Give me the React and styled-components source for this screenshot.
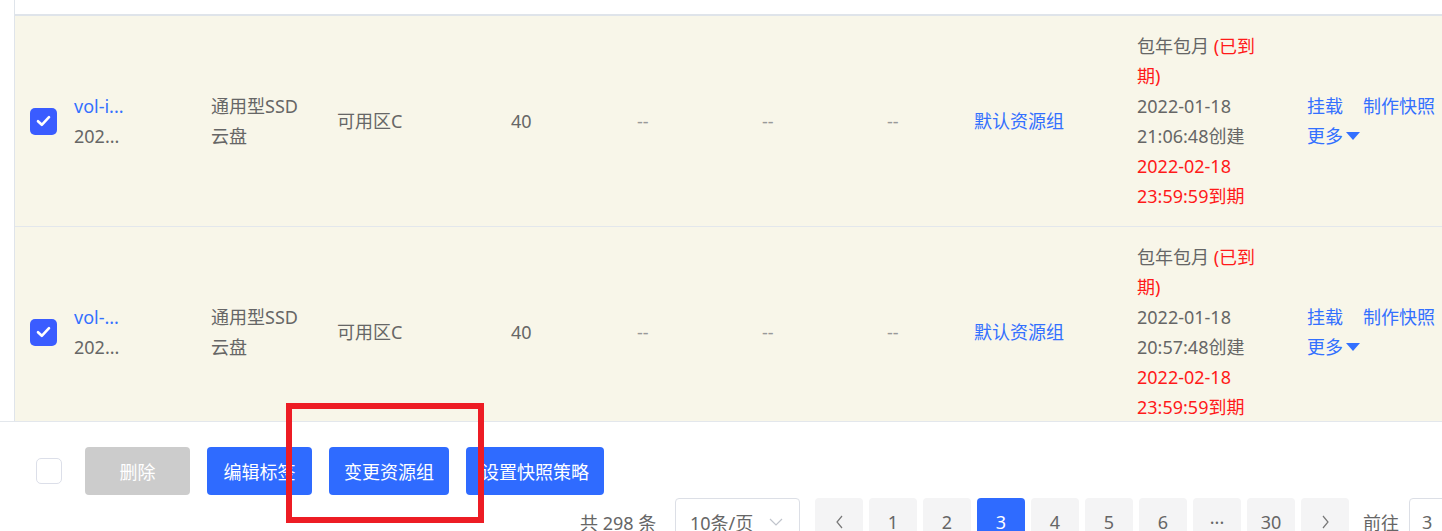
import React from 'react';
import styled, { createGlobalStyle } from 'styled-components';

const GlobalStyle = createGlobalStyle`
  body {
    margin: 0;
    overflow: hidden;
    background: #fff;
    font-family: "Noto Sans", "Noto Sans CJK SC", sans-serif;
  }
`;

const Page = styled.div`
  position: relative;
  height: 531px;
  display: flex;
  flex-direction: column;
  overflow: hidden;
`;

const TableArea = styled.div`
  flex: 1;
  overflow: hidden;
  padding-left: 14px;
`;

const TableFrame = styled.div`
  height: 100%;
  border-left: 1px solid #dfe4ea;
`;

const HeaderStub = styled.div`
  height: 14px;
  border-bottom: 2px solid #dfe4ea;
`;

const Row = styled.div`
  display: grid;
  grid-template-columns: 59px 137px 126px 174px 126px 125px 125px 87px 163px 170px 1fr;
  align-items: center;
  padding: 15px 0;
  background: #f8f6e9;
  border-bottom: 1px solid #e3e7ec;
  font-size: 18px;
  line-height: 30px;
  color: #666;
`;

const Cell = styled.div`
  color: ${(p) => (p.$link ? '#3370ff' : p.$muted ? '#999' : '#666')};
  white-space: ${(p) => (p.$wrap ? 'normal' : 'nowrap')};
  width: ${(p) => p.$w || 'auto'};
`;

const Red = styled.span`
  color: #ff1a1a;
`;

const Line = styled.div`
  color: ${(p) => (p.$red ? '#ff1a1a' : p.$link ? '#3370ff' : '#666')};
`;

const Box = styled.div`
  width: 27px;
  height: 27px;
  margin-left: 15px;
  box-sizing: border-box;
  border-radius: 5px;
  display: flex;
  align-items: center;
  justify-content: center;
  background: ${(p) => (p.$checked ? '#3a5cff' : '#fff')};
  border: ${(p) => (p.$checked ? 'none' : '1.5px solid #dcdfe9')};
`;

const Actions = styled.div`
  display: flex;
  flex-wrap: wrap;
  column-gap: 20px;
  width: 135px;
  color: #3370ff;
`;

const More = styled.span`
  display: inline-flex;
  align-items: center;
  gap: 3px;
`;

const Footer = styled.div`
  height: 110px;
  flex-shrink: 0;
  border-top: 1px solid #e3e7ec;
  padding-top: 25px;
  box-sizing: border-box;
  position: relative;
`;

const BulkBar = styled.div`
  display: flex;
  align-items: center;
  padding-left: 36px;
  gap: 17px;
`;

const BulkCheck = styled(Box)`
  margin-left: 0;
  width: 26px;
  height: 26px;
  margin-right: 6px;
`;

const Button = styled.button`
  height: 48px;
  min-width: 105px;
  padding: 0 15px;
  border: none;
  border-radius: 4px;
  font-family: inherit;
  font-size: 18px;
  color: #fff;
  background: ${(p) => (p.disabled ? '#cccccc' : '#2f6bff')};
  white-space: nowrap;
`;

const Pager = styled.div`
  display: flex;
  align-items: center;
  margin-top: 3px;
  padding-left: 580px;
  white-space: nowrap;
  font-size: 18px;
  color: #666;
`;

const Total = styled.span`
  width: 95px;
  flex-shrink: 0;
`;

const SizeSelect = styled.div`
  width: 125px;
  height: 48px;
  box-sizing: border-box;
  border: 1px solid #dcdfe6;
  border-radius: 4px;
  display: flex;
  align-items: center;
  justify-content: space-between;
  padding: 0 16px 0 14px;
  margin-right: 15px;
  flex-shrink: 0;
`;

const PageList = styled.div`
  display: flex;
  gap: 6px;
  margin-right: 14px;
`;

const PageBtn = styled.div`
  width: 48px;
  height: 48px;
  flex-shrink: 0;
  border-radius: 4px;
  display: flex;
  align-items: center;
  justify-content: center;
  background: ${(p) => (p.$active ? '#2f6bff' : '#f4f4f5')};
  color: ${(p) => (p.$active ? '#fff' : '#666')};
`;

const JumpInput = styled.div`
  width: 60px;
  height: 48px;
  flex-shrink: 0;
  box-sizing: border-box;
  margin-left: 10px;
  border: 1px solid #dcdfe6;
  border-radius: 4px;
  padding-left: 12px;
  display: flex;
  align-items: center;
`;

const Highlight = styled.div`
  position: absolute;
  left: 286px;
  top: 403px;
  width: 198px;
  height: 120px;
  box-sizing: border-box;
  border: 6px solid #ed1c24;
  pointer-events: none;
`;

const Check = () => (
  <svg width="15" height="12" viewBox="0 0 15 12">
    <path d="M2 6.2l3.8 3.6L13 2.2" fill="none" stroke="#fff" strokeWidth="2.6" strokeLinecap="round" strokeLinejoin="round" />
  </svg>
);

const Caret = () => (
  <svg width="14" height="8" viewBox="0 0 14 8">
    <path d="M0 0h14L7 8z" fill="#3370ff" />
  </svg>
);

const Chevron = ({ dir }) => {
  const d = {
    down: 'M1 1l6 6 6-6',
    left: 'M6 1L1 7l5 6',
    right: 'M1 1l5 6-5 6',
  }[dir];
  const size = dir === 'down' ? [14, 8] : [7, 14];
  return (
    <svg width={size[0]} height={size[1]} viewBox={`0 0 ${size[0]} ${size[1]}`}>
      <path d={d} fill="none" stroke={dir === 'down' ? '#c0c4cc' : '#777'} strokeWidth="1.2" />
    </svg>
  );
};

const rows = [
  { id: 'vol-i...', created: '21:06:48创建' },
  { id: 'vol-...', created: '20:57:48创建' },
];

const pages = ['1', '2', '3', '4', '5', '6', '···', '30'];

const App = () => (
  <Page>
    <GlobalStyle />
    <TableArea>
      <TableFrame>
        <HeaderStub />
        {rows.map((r) => (
          <Row key={r.created}>
            <Box $checked><Check /></Box>
            <Cell>
              <Line $link>{r.id}</Line>
              <Line>202...</Line>
            </Cell>
            <Cell>
              <Line>通用型SSD</Line>
              <Line>云盘</Line>
            </Cell>
            <Cell>可用区C</Cell>
            <Cell>40</Cell>
            <Cell $muted>--</Cell>
            <Cell $muted>--</Cell>
            <Cell $muted>--</Cell>
            <Cell $link>默认资源组</Cell>
            <Cell $wrap $w="124px">
              <div>包年包月 <Red>(已到期)</Red></div>
              <Line>2022-01-18</Line>
              <Line>{r.created}</Line>
              <Line $red>2022-02-18</Line>
              <Line $red>23:59:59到期</Line>
            </Cell>
            <Actions>
              <span>挂载</span>
              <span>制作快照</span>
              <More>更多<Caret /></More>
            </Actions>
          </Row>
        ))}
      </TableFrame>
    </TableArea>
    <Footer>
      <BulkBar>
        <BulkCheck />
        <Button disabled>删除</Button>
        <Button>编辑标签</Button>
        <Button>变更资源组</Button>
        <Button>设置快照策略</Button>
      </BulkBar>
      <Pager>
        <Total>共 298 条</Total>
        <SizeSelect>
          <span>10条/页</span>
          <Chevron dir="down" />
        </SizeSelect>
        <PageList>
          <PageBtn><Chevron dir="left" /></PageBtn>
          {pages.map((p) => (
            <PageBtn key={p} $active={p === '3'}>{p}</PageBtn>
          ))}
          <PageBtn><Chevron dir="right" /></PageBtn>
        </PageList>
        <span>前往</span>
        <JumpInput>3</JumpInput>
      </Pager>
    </Footer>
    <Highlight />
  </Page>
);

export default App;
